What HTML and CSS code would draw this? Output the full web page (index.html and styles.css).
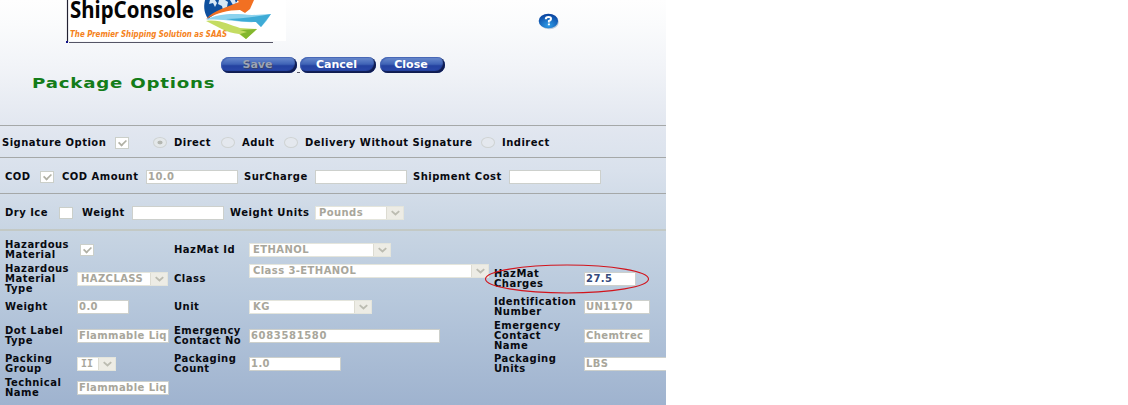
FILE: index.html
```html
<!DOCTYPE html>
<html lang="en">
<head>
<meta charset="utf-8">
<title>Package Options</title>
<link rel="stylesheet" href="styles.css">
</head>
<body>
<main class="panel">
  <header class="top">
    <svg class="logo" width="220" height="44" viewBox="66 0 220 44">
      <rect x="66" y="0" width="220" height="41" fill="#fff"/>
      <path d="M67.5 0V42" stroke="#223" stroke-width="1.2"/>
      <path d="M69 42.5H273" stroke="#556" stroke-width="1"/>
      <rect x="66" y="41" width="2" height="2" fill="#118"/>
      <text class="brand" x="70" y="18" textLength="124" lengthAdjust="spacingAndGlyphs">ShipConsole</text>
      <text class="tagline" x="70" y="36.5" textLength="157" lengthAdjust="spacingAndGlyphs">The Premier Shipping Solution as SAAS</text>
      <path d="M205 0C203 8 205 14 208 19C214 14 223 10 233 7L238 0Z" fill="#0d4f9e"/>
      <path d="M210 0L209 4L213 3L215 7L217 3L215 0ZM219 0L218 4L222 6L223 10L227 7L228 2L225 0ZM230 0L233 5L236 3L235 0Z" fill="#d7e7f5"/>
      <path d="M206 19C214 10 228 7 239 2L237 0H254L250 9L245 13L240 10C228 10 217 13 206 19Z" fill="#f27022"/>
      <path d="M206 20C220 12 238 14 252 15L271 14C268 19 265 23 261 27L256 22C239 23 222 18 206 20Z" fill="#8dd3ee"/>
      <path d="M226 19C240 19 255 17 271 14L261 27L256 22C246 22 236 21 226 19Z" fill="#249dce" opacity=".75"/>
      <path d="M206 21C220 19 229 25 240 28L257 29L246 39L239 34C226 33 217 26 206 21Z" fill="#c4dc62"/>
      <path d="M240 30L257 29L246 39L240 34L247 32Z" fill="#83b72f"/>
    </svg>
    <svg class="help" width="22" height="18" viewBox="0 0 22 18">
      <defs><radialGradient id="ball" cx=".5" cy=".8" r=".8"><stop offset="0" stop-color="#2e9ce8"/><stop offset="1" stop-color="#073f9c"/></radialGradient></defs>
      <ellipse cx="11.3" cy="9" rx="9.5" ry="7.3" fill="#b8c9dc"/>
      <ellipse cx="10.4" cy="8" rx="9.7" ry="7.3" fill="url(#ball)"/>
      <path d="M7.8 6.2Q7.8 4 10.5 4Q13.3 4 13 6.2Q12.8 7.5 10.9 8V9.5M10.9 10.6V12.2" fill="none" stroke="#fff" stroke-width="2"/>
    </svg>
    <h1 class="title"><span>Package Options</span></h1>
    <div class="buttons">
      <button class="pill save" disabled>Save</button><i class="dash"></i>
      <button class="pill cancel">Cancel</button>
      <button class="pill close">Close</button>
    </div>
  </header>

  <section class="line signature">
    <span class="label w-sig">Signature Option</span><i class="check on"></i>
    <i class="radio on first"></i><span class="label w-direct">Direct</span>
    <i class="radio"></i><span class="label w-adult">Adult</span>
    <i class="radio"></i><span class="label w-delivery">Delivery Without Signature</span>
    <i class="radio"></i><span class="label">Indirect</span>
  </section>

  <section class="line cod">
    <span class="label w-cod">COD</span><i class="check on"></i>
    <span class="label w-amount">COD Amount</span><span class="field f92">10.0</span>
    <span class="label w-sur">SurCharge</span><span class="field f92"></span>
    <span class="label w-cost">Shipment Cost</span><span class="field f92"></span>
  </section>

  <section class="line ice">
    <span class="label w-ice">Dry Ice</span><i class="check"></i>
    <span class="label w-weight">Weight</span><span class="field f92"></span>
    <span class="label w-units">Weight Units</span><span class="field select f89">Pounds<svg class="arrow" viewBox="0 0 17 12"><path d="M5 4l4 3.5l4-3.5"/></svg></span>
  </section>

  <section class="hazmat">
    <span class="label">Hazardous<br>Material</span><i class="check on"></i>
    <span class="label">HazMat Id</span><span class="field select f142">ETHANOL<svg class="arrow" viewBox="0 0 17 12"><path d="M5 4l4 3.5l4-3.5"/></svg></span>
    <span></span><span></span>

    <span class="label">Hazardous<br>Material<br>Type</span><span class="field select f91">HAZCLASS<svg class="arrow" viewBox="0 0 17 12"><path d="M5 4l4 3.5l4-3.5"/></svg></span>
    <span class="label">Class</span><span class="field select f240 high">Class 3-ETHANOL<svg class="arrow" viewBox="0 0 17 12"><path d="M5 4l4 3.5l4-3.5"/></svg></span>
    <span class="label">HazMat<br>Charges</span><span class="field f52 active">27.5</span>

    <span class="label">Weight</span><span class="field f52">0.0</span>
    <span class="label">Unit</span><span class="field select f123">KG<svg class="arrow" viewBox="0 0 17 12"><path d="M5 4l4 3.5l4-3.5"/></svg></span>
    <span class="label">Identification<br>Number</span><span class="field f66">UN1170</span>

    <span class="label">Dot Label<br>Type</span><span class="field f92">Flammable Liq</span>
    <span class="label">Emergency<br>Contact No</span><span class="field f191 wide">6083581580</span>
    <span class="label">Emergency<br>Contact<br>Name</span><span class="field f66">Chemtrec</span>

    <span class="label">Packing<br>Group</span><span class="field select f39 serif-i">II<svg class="arrow" viewBox="0 0 17 12"><path d="M5 4l4 3.5l4-3.5"/></svg></span>
    <span class="label">Packaging<br>Count</span><span class="field f92">1.0</span>
    <span class="label">Packaging<br>Units</span><span class="field f92">LBS</span>

    <span class="label">Technical<br>Name</span><span class="field f92">Flammable Liq</span>
    <svg class="ring" width="166" height="30" viewBox="0 0 166 30"><ellipse cx="83" cy="15" rx="81.5" ry="14" fill="none" stroke="#d2141c" stroke-width="1.1"/></svg>
  </section>
</main>
</body>
</html>
```
FILE: styles.css
```css
* { box-sizing: border-box; }
body { margin: 0; background: #fff; font-family: "DejaVu Sans", Verdana, sans-serif; overflow: hidden; }
.panel {
  width: 666px; height: 405px; overflow: hidden; position: relative;
  background: linear-gradient(#fefefe 0, #fafbfc 25px, #f2f4f8 65px, #e2e7f0 125px, #d9e1ec 170px, #c8d5e3 230px, #b7c8dc 300px, #9fb3cf 405px);
}
.top {
  height: 125px; display: grid;
  grid-template-columns: 221px 317px 128px; grid-template-rows: 56px 69px;
}
.logo { grid-column: 1 / 3; grid-row: 1; margin-left: 66px; display: block; }
.brand { font: bold 22.5px "Noto Sans", "Open Sans", sans-serif; fill: #050505; }
.tagline { font: italic bold 9.5px "DejaVu Sans Condensed", "DejaVu Sans", sans-serif; fill: #f58220; }
.help { grid-column: 3; grid-row: 1; margin-top: 13px; }
.title { margin: 19px 0 0 32px; font-size: 14px; line-height: 16px; color: #137c19; white-space: nowrap; }
.title span { display: inline-block; letter-spacing: .6px; transform: scaleX(1.3); transform-origin: left; }
.buttons { display: flex; align-items: flex-start; padding-top: 1px; }
.pill {
  height: 16px; padding: 0 3px 1px 0; border: 0; border-radius: 8px;
  font: bold 11px/14px "DejaVu Sans", Verdana, sans-serif; color: #fff;
  background: linear-gradient(#6e8fd0 0, #3f63b6 45%, #2442a0 55%, #2d4cad 100%);
  box-shadow: inset -2px -2px 1px #101c50, inset 1px 1px 1px #4564b4;
}
.save { width: 76px; color: #9ba3b4; text-shadow: 1px 1px #37436c; }
.cancel { width: 76px; margin-right: 4px; }
.close { width: 65px; }
.dash { width: 3px; height: 1px; margin-top: 15px; background: #556; }
.line { display: flex; align-items: center; border-top: 1px solid #a5a8a8; }
.signature { height: 32px; padding: 2px 0 0 2px; }
.cod { height: 36px; padding: 2px 0 0 5px; }
.ice { height: 36px; padding: 2px 0 0 5px; }
.label { font-size: 10px; line-height: 10px; font-weight: bold; letter-spacing: .48px; color: #080a10; white-space: nowrap; }
.w-sig { width: 113px; letter-spacing: .48px; }
.w-direct { width: 47px; }
.w-adult { width: 42px; }
.w-delivery { width: 176px; letter-spacing: .52px; }
.w-cod { width: 35px; }
.w-amount { width: 84px; margin-left: 8px; }
.w-sur { width: 71px; margin-left: 6px; }
.w-cost { width: 96px; margin-left: 6px; }
.w-ice { width: 54px; }
.w-weight { width: 50px; margin-left: 9px; }
.w-units { width: 85px; margin-left: 6px; letter-spacing: .56px; }
.check { width: 14px; height: 12px; background: #fff; border: 1px solid #cbcfc9; position: relative; flex: none; }
.check.on::after {
  content: ""; position: absolute; left: 2px; top: 1px; width: 7px; height: 4px;
  border: solid #b0b0a4; border-width: 0 0 2px 2px; transform: rotate(-45deg) scale(.85);
}
.radio {
  width: 14px; height: 11px; margin-right: 7px; border: 1px solid #cfd3d3;
  border-radius: 50%; background: #e4e8ee; flex: none;
}
.radio.first { margin-left: 24px; }
.radio.on { background: radial-gradient(#b4b7b2 0 2px, #e4e8ea 3px); }
.field {
  height: 14px; padding-left: 1px; border: 1px solid #cdd0cc; background: #fff;
  display: flex; align-items: center; overflow: hidden; flex: none;
  font-size: 10px; line-height: 12px; letter-spacing: .42px; font-weight: bold; color: #a8a69b; white-space: nowrap;
}
.select { padding-left: 3px; border-color: #e4e5dc; }
.wide { letter-spacing: .65px; }
.serif-i { font-family: "DejaVu Sans Mono", monospace; letter-spacing: 0; }
.arrow { width: 17px; height: 12px; margin-left: auto; background: #edece5; border-left: 1px solid #dddcd2; flex: none; }
.arrow path { fill: none; stroke: #bcbcb1; stroke-width: 2; }
.active { color: #344a7c; }
.high { align-self: start; margin-top: 3px; }
.f39 { width: 39px; } .f52 { width: 52px; } .f66 { width: 66px; }
.f89 { width: 89px; } .f91 { width: 91px; } .f92 { width: 92px; }
.f123 { width: 123px; } .f142 { width: 142px; } .f191 { width: 191px; } .f240 { width: 240px; }
.hazmat {
  height: 176px; padding: 7px 0 0 5px; border-top: 2px solid #c3c9c5; position: relative;
  display: grid; align-items: center;
  grid-template-columns: 72px 97px 75px 245px 90px 92px;
  grid-template-rows: 23px 35px 22px 35px 22px 26px;
}
.hazmat .check { margin-left: 3px; }
.ring { position: absolute; left: 484px; top: 33px; }
```
